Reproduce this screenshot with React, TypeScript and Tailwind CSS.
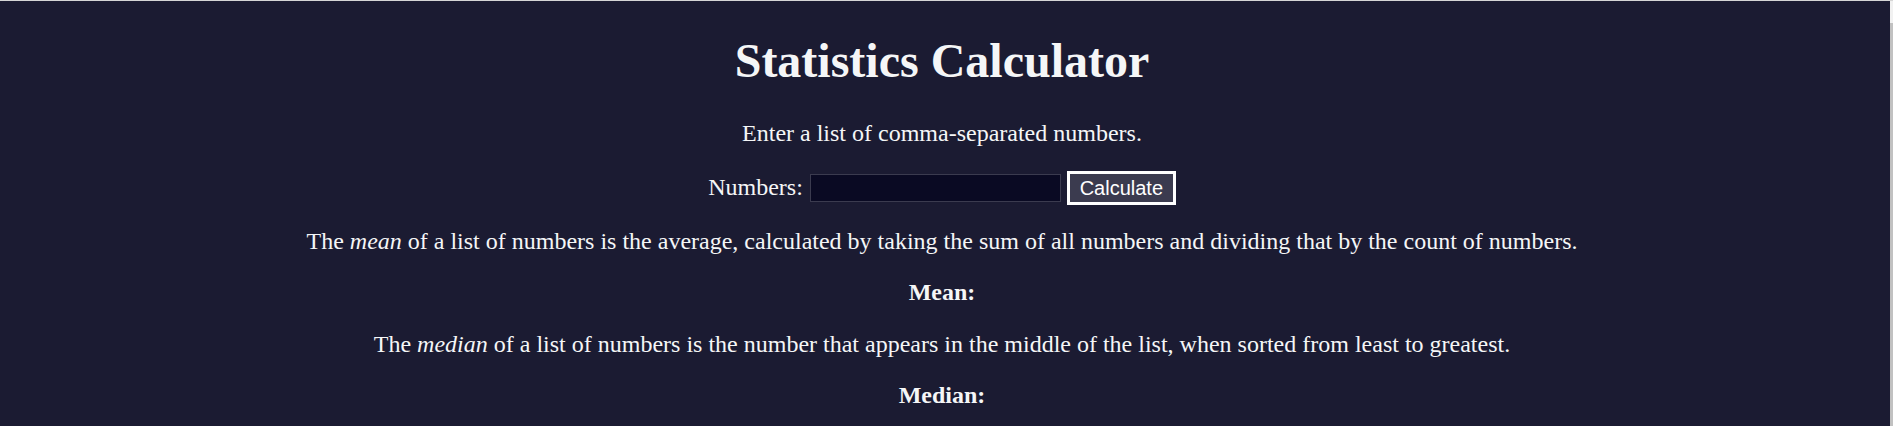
export default function App() {
  return (
    <div className="flex h-[426px] w-full overflow-hidden border-t border-[#d6d6d6] bg-[#1b1b32] font-['Liberation_Serif',serif] text-[#f5f6f7]">
      <main className="flex-1 pr-[6px] text-center text-[24px] leading-[27.6px]">
        <h1 className="mt-[32px] mb-[32px] text-[48px] leading-[55px] font-bold">
          Statistics Calculator
        </h1>

        <p>Enter a list of comma-separated numbers.</p>

        <form
          className="mt-[23px] flex h-[34px] items-center justify-center gap-[6px]"
          onSubmit={(e) => e.preventDefault()}
        >
          <label htmlFor="numbers" className="mr-[1px]">
            Numbers:
          </label>
          <input
            id="numbers"
            type="text"
            className="h-[28px] w-[251px] border border-[#3b3b4f] bg-[#0a0a23] px-1 text-[20px] text-white outline-none"
          />
          <button
            type="submit"
            className="h-[34px] w-[109px] border-[3px] border-white bg-[#3b3b4f] font-['Liberation_Sans',Arial,sans-serif] text-[20px] leading-none text-white"
          >
            Calculate
          </button>
        </form>

        <p className="mt-[23px]">
          The <em>mean</em> of a list of numbers is the average, calculated by
          taking the sum of all numbers and dividing that by the count of
          numbers.
        </p>
        <p className="mt-6 font-bold">Mean:</p>

        <p className="mt-6">
          The <em>median</em> of a list of numbers is the number that appears
          in the middle of the list, when sorted from least to greatest.
        </p>
        <p className="mt-6 font-bold">Median:</p>
      </main>

      {/* thin scrollbar strip on the right edge */}
      <div className="flex w-[3px] flex-col bg-[#f1f1f1]">
        <div className="h-[22px]" />
        <div className="flex-1 bg-[#c1c1c1]" />
      </div>
    </div>
  );
}
